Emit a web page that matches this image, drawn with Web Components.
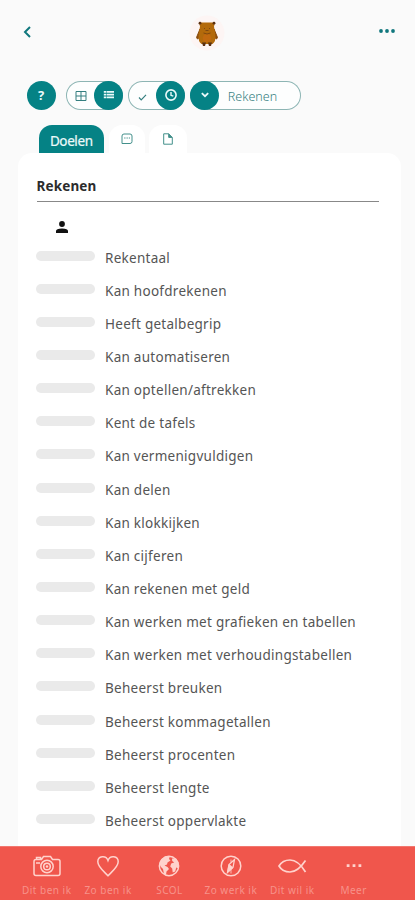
<!DOCTYPE html>
<html lang="nl">
<head>
<meta charset="utf-8">
<title>Rekenen</title>
<style>
html,body{margin:0;height:100%;background:#fafafa;overflow:hidden}
body{font-family:"Noto Sans","Open Sans",sans-serif;--teal:#058285;--coral:#f0564c}
</style>
</head>
<body>
<goal-app></goal-app>
<script>
const define = (name, html, setup) => customElements.define(name, class extends HTMLElement {
  connectedCallback() {
    if (this.shadowRoot) return;
    const root = this.attachShadow({mode: 'open'});
    const t = document.createElement('template');
    t.innerHTML = html;
    root.append(t.content.cloneNode(true));
    if (setup) setup(this, root);
  }
});

const icons = {
  back: [10, 14, '<path d="M8 2 3 7l5 5" fill="none" stroke="currentColor" stroke-width="2"/>'],
  dots: [18, 6, '<g fill="currentColor"><circle cx="3" cy="3" r="1.9"/><circle cx="9" cy="3" r="1.9"/><circle cx="15" cy="3" r="1.9"/></g>'],
  bear: [36, 36, '<circle cx="18" cy="18" r="17.5" fill="#fdf5f4"/><path d="M11 14 7.500 22.500l1 1.500L11 22zM25 14l3.500 8.500-1 1.500L25 22z" fill="#8a4b0c" stroke="#8a4b0c"/><path d="M10 7.500h16l-1 4 1.500 9q.500 6-3 8.500h-11q-3.500-2.500-3-8.500l1.500-9z" fill="#b36a0b"/><circle cx="18" cy="23" r="4.300" fill="#c1690f"/><g fill="#5b3011"><circle cx="11" cy="8.200" r="1.400"/><circle cx="25" cy="8.200" r="1.400"/><path d="M13 27.500h4l-1 3.500h-2zM19 27.500h4l-1 3.500h-2z"/></g><g fill="none" stroke="#80480f" stroke-width="1"><path d="M15 13.500h1M20 13.500h1M16.500 15.500h3M14.500 18q3.500 2 7 0"/></g>'],
  grid: [12, 12, '<path d="M1 1.500h10v9H1zM6 1.500v9M1 6h10" fill="none" stroke="currentColor" stroke-width="1"/>'],
  list: [12, 10, '<path d="M.800 1.800H3m.500 0H11M.800 4.600H3m.500 0H11M.800 7.400H3m.500 0H11" stroke="currentColor" stroke-width="1.800"/>'],
  check: [9, 8, '<path d="m1 4.500 2.200 2.300L8 1.800" fill="none" stroke="currentColor" stroke-width="1.200"/>'],
  clock: [14, 14, '<circle cx="7" cy="7" r="5.100" fill="none" stroke="currentColor" stroke-width="1.600"/><path d="M7 4v3.300l2.300.900" fill="none" stroke="currentColor" stroke-width="1.400"/>'],
  down: [10, 6, '<path d="m1.800 1.200 3.200 3 3.200-3" fill="none" stroke="currentColor" stroke-width="1.800"/>'],
  chat: [14, 14, '<path d="M4 2h6q2 0 2 2v5.500q0 2-2 2H2V4q0-2 2-2z" fill="none" stroke="currentColor"/><path d="M4.200 6h1.300m1 0h1.300m1 0H10" stroke="currentColor"/>'],
  file: [12, 14, '<path d="M1.700 1.800h5l3.600 3.600v6.800H1.700z" fill="none" stroke="currentColor"/><path d="M6.700 1.800v3.600h3.600" fill="currentColor" stroke="currentColor"/>'],
  person: [14, 14, '<circle cx="7" cy="4" r="2.900" fill="currentColor"/><path d="M1 13v-2q0-2.500 6-2.500T13 11v2z" fill="currentColor"/>'],
  camera: [30, 24, '<g fill="none" stroke="currentColor" stroke-width="1.500"><path d="M4 4.500h5.500l2-3h7l2 3H26q2 0 2 2v12q0 2-2 2H4q-2 0-2-2v-12q0-2 2-2zM4.500 4V2.500h4V4"/><circle cx="15" cy="11.500" r="6.200"/><circle cx="15" cy="11.500" r="3.300"/></g><circle cx="15" cy="11.500" r="1.200" fill="currentColor"/><path d="M4 8h4" stroke="currentColor" stroke-width="1.500"/>'],
  heart: [24, 24, '<path d="M12 20.800C8 16.500 1.800 12 1.800 6.800c0-6 8.200-7 10.200-1.300 2-5.700 10.200-4.700 10.200 1.300C22.200 12 16 16.500 12 20.800z" fill="none" stroke="currentColor" stroke-width="1.500"/>'],
  globe: [24, 24, '<circle cx="12" cy="11" r="9.700" fill="none" stroke="currentColor" stroke-width="1.400"/><path transform="translate(0 -.5)" d="m4 5 4-3 5-.500-1 3 1.500 1.500-3 2-.500 2-2.500 1 3 1.500 1.500 2-2.500 2.500-.500 3.500-2-1-1-5-2.500-2.500-1-3zM15 4l4 0 2.500 4 .200 6-2.500-1-1 4-2.500 1-.500-4-2-2 1-3 3-1-2-1.500z" fill="currentColor"/>'],
  compass: [24, 24, '<circle cx="12" cy="11" r="9.800" fill="none" stroke="currentColor" stroke-width="1.500"/><path d="M15.500 4.500 14 12.500l-5.500 5L10 9.500z" fill="none" stroke="currentColor" stroke-width="1.300"/><path d="m10 9.500 4 3-5.500 5zM12 4.500v3M12 14.500v4" fill="currentColor" stroke="currentColor" stroke-width=".800"/>'],
  fish: [30, 24, '<path d="M28.500 5.500c-3 4.500-8 11.500-15.500 11.500-5 0-9-2.500-11-6 2-3.500 6-6 11-6 7.500 0 12.500 7 15.500 12" fill="none" stroke="currentColor" stroke-width="1.700"/>'],
  more: [18, 24, '<path d="M1.700 9.300h2.800v2.800H1.700zM7.600 9.300h2.800v2.800H7.600zM13.500 9.300h2.800v2.800h-2.800z" fill="currentColor"/>']
};

define('app-icon', '<style>:host{display:inline-flex;flex:none}svg{display:block}</style><span></span>', (el, root) => {
  const [w, h, d] = icons[el.getAttribute('name')];
  root.querySelector('span').innerHTML = `<svg width="${w}" height="${h}" viewBox="0 0 ${w} ${h}">${d}</svg>`;
});

define('round-button', `<style>:host{display:flex;flex:none;width:29px;height:29px;border-radius:50%;background:var(--teal);color:#eafafa;align-items:center;justify-content:center;font-weight:700;font-size:13px;line-height:29px}</style><slot></slot>`);

define('pill-box', `<style>
:host{display:flex;box-sizing:border-box;height:29px;border-radius:15px;box-shadow:inset 0 0 0 1px #8db5b4;color:#357f80;background:#fdfefe}
.plain{display:flex;align-items:center;justify-content:center;flex:1}
</style><slot name="start"></slot><span class="plain"><slot></slot></span><slot name="end"></slot>`);

define('top-bar', `<style>
:host{display:grid;grid-template-columns:1fr 36px 1fr;height:64px;padding:0 19px 0 22px;align-items:center;color:#10777d}
.dots{justify-self:end;margin-top:-3px}.bear{margin:2px 0 0 -2px}
</style><app-icon class="b" name="back"></app-icon><app-icon class="bear" name="bear"></app-icon><app-icon class="dots" name="dots"></app-icon>`);

define('tool-bar', `<style>
:host{display:flex;padding:16.500px 0 0 26.500px}
.t{width:57.500px;margin-left:10px}.u{width:57.500px;margin-left:4.500px}.s{width:111px;margin-left:5px}
.k{margin:3px 0 0 2px}.g{margin:1px 0 0 2px}
.txt{font-size:12.500px;font-weight:300;letter-spacing:.05px;margin:2px 15px 0 0}
</style>
<round-button>?</round-button>
<pill-box class="t"><app-icon class="g" name="grid"></app-icon><round-button slot="end"><app-icon name="list"></app-icon></round-button></pill-box>
<pill-box class="u"><app-icon class="k" name="check"></app-icon><round-button slot="end"><app-icon name="clock"></app-icon></round-button></pill-box>
<pill-box class="s"><round-button slot="start"><app-icon name="down"></app-icon></round-button><span class="txt">Rekenen</span></pill-box>`);

define('tab-item', `<style>
:host{display:flex;box-sizing:border-box;height:29px;border-radius:13px 13px 0 0;background:#fff;color:#43908b;justify-content:center;padding-top:7px}
:host([active]){background:var(--teal);color:#eefafa;font-size:13.500px;line-height:18px;letter-spacing:-.4px;-webkit-text-stroke:.2px}
</style><slot></slot>`);

define('tab-row', `<style>:host{display:flex;padding:15.500px 0 0 39px}
.a{width:64.500px}.b{width:36px;margin-left:5px}.c{width:38px;margin-left:4px}</style>
<tab-item class="a" active>Doelen</tab-item><tab-item class="b"><app-icon name="chat"></app-icon></tab-item><tab-item class="c"><app-icon name="file"></app-icon></tab-item>`);

define('goal-row', `<style>
:host{display:flex;height:33.150px;align-items:center}
i{width:59px;height:10px;border-radius:5px;background:#eaeaea;margin:-4px 10.500px 0 0;flex:none}
span{font-size:13.500px;letter-spacing:.27px;color:#555;white-space:nowrap}
</style><i></i><span><slot></slot></span>`);

define('goal-card', `<style>
:host{display:block;flex:1;min-height:0;overflow:hidden;background:#fff;border-radius:14px 14px 0 0;margin:-1px 14px 0 18px;padding:0 22px 0 17.500px}
h1{margin:0 0 0 1px;height:49px;box-sizing:border-box;border-bottom:1px solid #888;font-size:13.500px;line-height:20px;padding-top:23px;color:#2c2c2c;font-weight:700;letter-spacing:.15px}
.p{display:flex;padding:18px 0 0 19px;height:21px;color:#111}
</style><h1>Rekenen</h1><div class="p"><app-icon name="person"></app-icon></div><div id="rows"></div>`, (el, root) => {
  ['Rekentaal','Kan hoofdrekenen','Heeft getalbegrip','Kan automatiseren','Kan optellen/aftrekken','Kent de tafels','Kan vermenigvuldigen','Kan delen','Kan klokkijken','Kan cijferen','Kan rekenen met geld','Kan werken met grafieken en tabellen','Kan werken met verhoudingstabellen','Beheerst breuken','Beheerst kommagetallen','Beheerst procenten','Beheerst lengte','Beheerst oppervlakte'].forEach(s => {
    const r = document.createElement('goal-row');
    r.textContent = s;
    root.getElementById('rows').append(r);
  });
});

define('nav-item', `<style>
:host{display:flex;flex-direction:column;align-items:center;width:61.400px;padding-top:8px;color:#ffd2cc}
span{font-size:10px;line-height:14px;letter-spacing:.5px;color:#f7928a;margin-top:4px;white-space:nowrap}
</style><slot name="icon"></slot><span><slot></slot></span>`);

define('nav-bar', `<style>:host{display:flex;flex:none;height:54px;box-sizing:border-box;background:var(--coral);border-top:1px solid #f2776f;padding-left:16px}</style>
<nav-item><app-icon slot="icon" name="camera"></app-icon>Dit ben ik</nav-item>
<nav-item><app-icon slot="icon" name="heart"></app-icon>Zo ben ik</nav-item>
<nav-item><app-icon slot="icon" name="globe"></app-icon>SCOL</nav-item>
<nav-item><app-icon slot="icon" name="compass"></app-icon>Zo werk ik</nav-item>
<nav-item><app-icon slot="icon" name="fish"></app-icon>Dit wil ik</nav-item>
<nav-item><app-icon slot="icon" name="more"></app-icon>Meer</nav-item>`);

define('goal-app', `<style>:host{display:flex;flex-direction:column;height:900px;width:415px}</style>
<top-bar></top-bar><tool-bar></tool-bar><tab-row></tab-row><goal-card></goal-card><nav-bar></nav-bar>`);
</script>
</body>
</html>
